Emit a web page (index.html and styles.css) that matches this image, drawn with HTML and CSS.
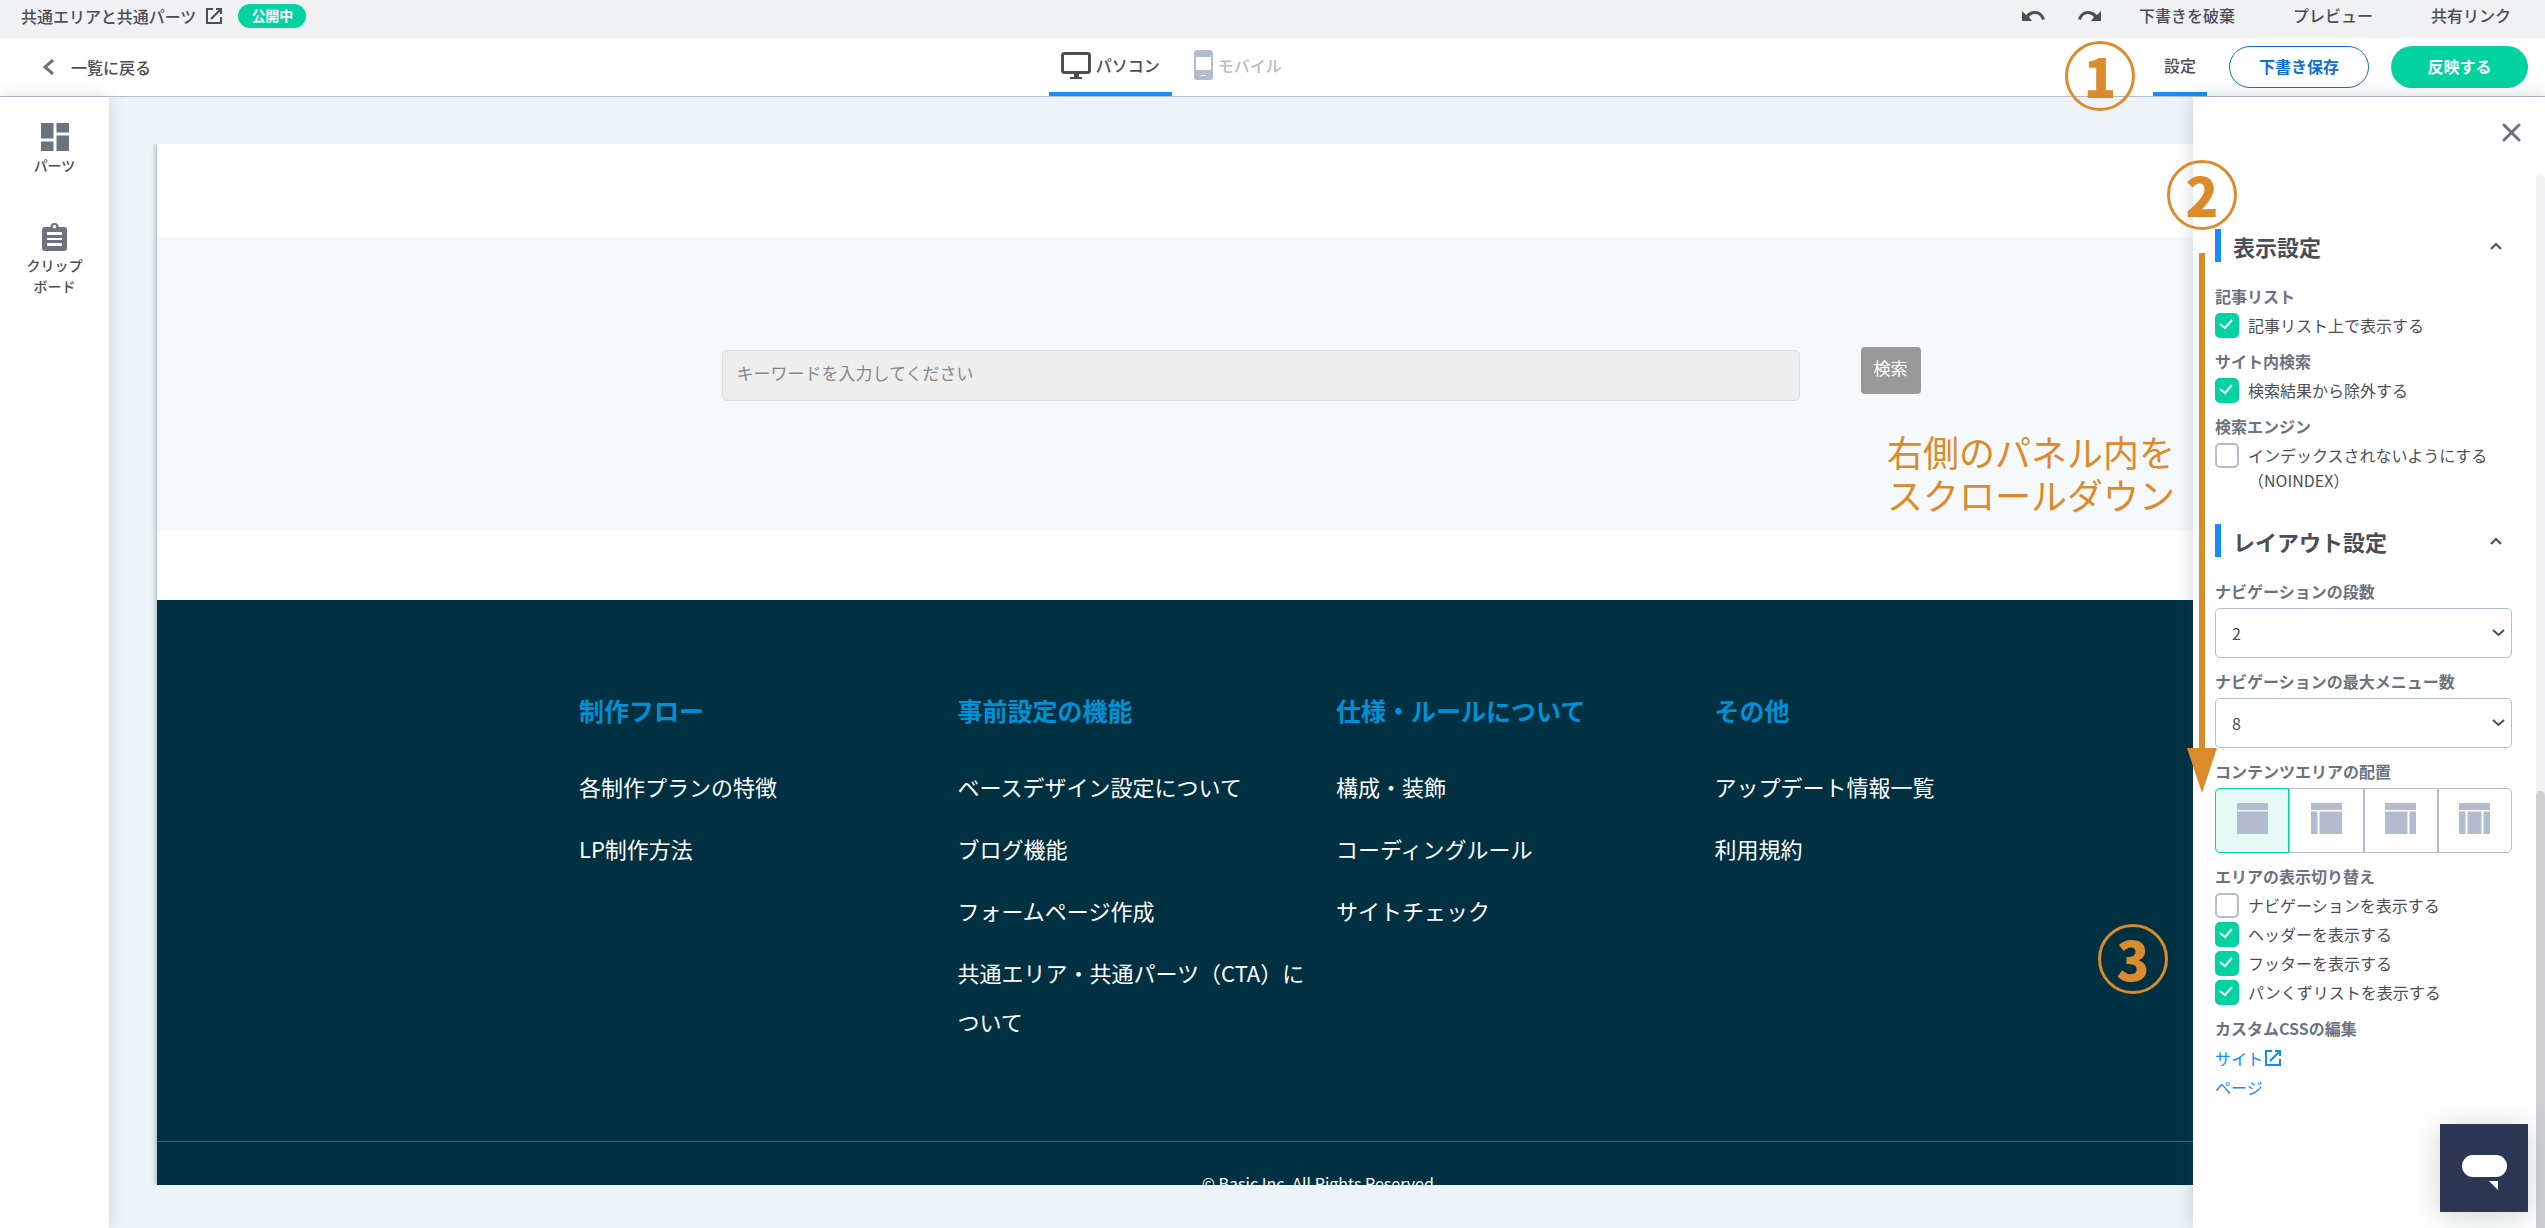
FILE: index.html
```html
<!DOCTYPE html>
<html lang="ja">
<head>
<meta charset="utf-8">
<meta name="viewport" content="width=device-width, initial-scale=1">
<title>共通エリアと共通パーツ</title>
<link rel="stylesheet" href="styles.css">
</head>
<body>
<div class="app">
  <div class="topbar">
    <div class="page-title">
      <a class="title-link" href="#">共通エリアと共通パーツ
        <svg width="16" height="16" viewBox="0 0 16 16" fill="none" stroke="currentColor" stroke-width="2"><path d="M7 1H1v14h14V9M10 1h5v5M15 1 5 11"/></svg>
      </a>
      <span class="badge">公開中</span>
    </div>
    <div class="top-actions">
      <button class="icon-btn" type="button" aria-label="元に戻す"><svg width="23" height="11" viewBox="0 0 23 11" fill="currentColor"><path d="M0 0l4 4C7 1 10 0 13 0c5 0 8 3 10 8l-3 1c-1-4-4-6-7-6-2 0-4 1-6 3l3 4H0z"/></svg></button>
      <button class="icon-btn" type="button" aria-label="やり直す"><svg width="23" height="11" viewBox="0 0 23 11" fill="currentColor"><path d="M23 0l-4 4C16 1 13 0 10 0 5 0 2 3 0 8l3 1c1-4 4-6 7-6 2 0 4 1 6 3l-3 4h10z"/></svg></button>
      <button class="text-btn" type="button">下書きを破棄</button>
      <button class="text-btn" type="button">プレビュー</button>
      <button class="text-btn" type="button">共有リンク</button>
    </div>
  </div>

  <header class="header">
    <a class="back" href="#">
      <svg width="11" height="16" viewBox="0 0 11 16" fill="none" stroke="#6b7280" stroke-width="3"><path d="M10 1 2 8l8 7"/></svg>
      一覧に戻る
    </a>
    <div class="device-tabs">
      <button class="tab tab-active" type="button">
        <svg width="30" height="27" viewBox="0 0 30 27"><rect x="1.500" y="1.500" width="27" height="19" rx="2" fill="none" stroke="#4b4d57" stroke-width="3"/><path d="M13 21h5v4h3v2H9v-2h4z" fill="#4b4d57"/></svg>
        パソコン
      </button>
      <button class="tab tab-idle" type="button">
        <svg width="19" height="30" viewBox="0 0 19 30"><path fill="#b3bbcf" fill-rule="evenodd" d="M3 0h13q3 0 3 3v24q0 3-3 3H3q-3 0-3-3V3q0-3 3-3zM2 7v13h15V7zm5 18v1h5v-1z"/></svg>
        モバイル
      </button>
    </div>
    <div class="header-actions">
      <button class="tab tab-settings" type="button">設定</button>
      <button class="pill pill-outline" type="button">下書き保存</button>
      <button class="pill pill-solid" type="button">反映する</button>
    </div>
  </header>

  <div class="workspace">
    <nav class="sidebar">
      <button class="tool" type="button">
        <svg width="28" height="28" viewBox="0 0 28 28" fill="#6b7280"><path d="M0 0h12.500v15.500H0zM15.500 0H28v9.500H15.500zM0 18.500h12.500V28H0zM15.500 12.500H28V28H15.500z"/></svg>
        <span>パーツ</span>
      </button>
      <button class="tool" type="button">
        <svg width="25" height="28" viewBox="0 0 25 28"><path fill="#6b7280" fill-rule="evenodd" d="M3 4h5.500a4 4 0 0 1 8 0H22q3 0 3 3v18q0 3-3 3H3q-3 0-3-3V7q0-3 3-3zm9.500-2a1.700 1.700 0 1 0 .01 0zM5 9v3h15V9zm0 6v2h15v-2zm0 5v3h15v-3z"/></svg>
        <span>クリップ<br>ボード</span>
      </button>
    </nav>

    <main class="stage">
      <div class="canvas">
        <form class="search">
          <input class="search-input" type="text" placeholder="キーワードを入力してください" aria-label="キーワード">
          <button class="search-btn" type="button">検索</button>
        </form>
        <footer class="site-footer">
          <div class="columns">
            <section class="column">
              <h3>制作フロー</h3>
              <a href="#">各制作プランの特徴</a>
              <a href="#">LP制作方法</a>
            </section>
            <section class="column">
              <h3>事前設定の機能</h3>
              <a href="#">ベースデザイン設定について</a>
              <a href="#">ブログ機能</a>
              <a href="#">フォームページ作成</a>
              <a href="#">共通エリア・共通パーツ（CTA）について</a>
            </section>
            <section class="column">
              <h3>仕様・ルールについて</h3>
              <a href="#">構成・装飾</a>
              <a href="#">コーディングルール</a>
              <a href="#">サイトチェック</a>
            </section>
            <section class="column">
              <h3>その他</h3>
              <a href="#">アップデート情報一覧</a>
              <a href="#">利用規約</a>
            </section>
          </div>
          <p class="copyright">© Basic Inc. All Rights Reserved.</p>
        </footer>
      </div>
    </main>

    <aside class="panel">
      <div class="panel-main">
        <button class="close" type="button" aria-label="閉じる"><svg width="19" height="19" viewBox="0 0 19 19" fill="none" stroke="#6b7280" stroke-width="3" stroke-linecap="round"><path d="M2 2l15 15M17 2 2 17"/></svg></button>

        <section class="group">
          <h2 class="group-title">表示設定
            <svg width="12" height="8" viewBox="0 0 12 8" fill="none" stroke="currentColor" stroke-width="2"><path d="M1 7l5-5 5 5"/></svg>
          </h2>
          <div class="field">
            <p class="label">記事リスト</p>
            <label class="check"><input type="checkbox" checked>記事リスト上で表示する</label>
          </div>
          <div class="field">
            <p class="label">サイト内検索</p>
            <label class="check"><input type="checkbox" checked>検索結果から除外する</label>
          </div>
          <div class="field">
            <p class="label">検索エンジン</p>
            <label class="check"><input type="checkbox"><span>インデックスされないようにする<br>（NOINDEX）</span></label>
          </div>
        </section>

        <section class="group">
          <h2 class="group-title">レイアウト設定
            <svg width="12" height="8" viewBox="0 0 12 8" fill="none" stroke="currentColor" stroke-width="2"><path d="M1 7l5-5 5 5"/></svg>
          </h2>
          <div class="field">
            <label class="label" for="rows">ナビゲーションの段数</label>
            <div class="select">
              <select id="rows"><option>1</option><option selected>2</option></select>
              <svg width="13" height="8" viewBox="0 0 13 8" fill="none" stroke="#4b4d57" stroke-width="2"><path d="M1 1l5.500 5L12 1"/></svg>
            </div>
          </div>
          <div class="field">
            <label class="label" for="menus">ナビゲーションの最大メニュー数</label>
            <div class="select">
              <select id="menus"><option>7</option><option selected>8</option></select>
              <svg width="13" height="8" viewBox="0 0 13 8" fill="none" stroke="#4b4d57" stroke-width="2"><path d="M1 1l5.500 5L12 1"/></svg>
            </div>
          </div>
          <div class="field">
            <p class="label">コンテンツエリアの配置</p>
            <div class="layouts">
              <label class="layout"><input type="radio" name="layout" aria-label="1カラム" checked><svg width="31" height="31" viewBox="0 0 31 31"><path d="M0 0h31v7H0zM0 8.500h31V31H0z"/></svg></label>
              <label class="layout"><input type="radio" name="layout" aria-label="左サイド"><svg width="31" height="31" viewBox="0 0 31 31"><path d="M0 0h31v7H0zM0 8.500h6.500V31H0zM8.500 8.500H31V31H8.500z"/></svg></label>
              <label class="layout"><input type="radio" name="layout" aria-label="右サイド"><svg width="31" height="31" viewBox="0 0 31 31"><path d="M0 0h31v7H0zM0 8.500h22.500V31H0zM24.500 8.500H31V31h-6.500z"/></svg></label>
              <label class="layout"><input type="radio" name="layout" aria-label="両サイド"><svg width="31" height="31" viewBox="0 0 31 31"><path d="M0 0h31v7H0zM0 8.500h6.500V31H0zM8.500 8.500h14V31h-14zM24.500 8.500H31V31h-6.500z"/></svg></label>
            </div>
          </div>
          <div class="field">
            <p class="label">エリアの表示切り替え</p>
            <div class="stack">
              <label class="check"><input type="checkbox">ナビゲーションを表示する</label>
              <label class="check"><input type="checkbox" checked>ヘッダーを表示する</label>
              <label class="check"><input type="checkbox" checked>フッターを表示する</label>
              <label class="check"><input type="checkbox" checked>パンくずリストを表示する</label>
            </div>
          </div>
          <div class="field">
            <p class="label">カスタムCSSの編集</p>
            <div class="stack">
              <a class="link" href="#">サイト<svg width="16" height="16" viewBox="0 0 16 16" fill="none" stroke="currentColor" stroke-width="2"><path d="M7 1H1v14h14V9M10 1h5v5M15 1 5 11"/></svg></a>
              <a class="link" href="#">ページ</a>
            </div>
          </div>
        </section>
      </div>
      <div class="scrollbar"><div class="thumb"></div></div>
    </aside>
  </div>
</div>

<div class="mark mark-1">1</div>
<div class="mark mark-2">2</div>
<div class="mark mark-3">3</div>
<p class="note">右側のパネル内を<br>スクロールダウン</p>
<svg class="arrow" width="30" height="540" viewBox="0 0 30 540"><path fill="#db8b2c" d="M12 0h6v495h12l-15 45L0 495h12z"/></svg>
<button class="chat" type="button" aria-label="チャット"><svg width="88" height="88" viewBox="0 0 88 88" fill="#fff"><rect x="22" y="31" width="45" height="22" rx="11"/><path d="M49 57h9v9z"/></svg></button>
</body>
</html>
```
FILE: styles.css
```css
* { box-sizing: border-box; }

body {
  margin: 0;
  position: relative;
  font-family: "Noto Sans CJK JP", sans-serif;
  font-size: 16px;
  line-height: 24px;
  color: #4b4d57;
}

h2, h3, p { margin: 0; }
a { color: inherit; text-decoration: none; }
svg { display: block; flex: none; }

button {
  margin: 0;
  padding: 0;
  border: 0;
  background: none;
  color: inherit;
  font: inherit;
  cursor: pointer;
}

.app {
  display: flex;
  flex-direction: column;
  height: 100vh;
  overflow: hidden;
}

/* Top bar */
.topbar {
  display: flex;
  justify-content: space-between;
  height: 38px;
  padding: 4px 34px 0 21px;
  background: #eff1f3;
  font-weight: 500;
}

.page-title { display: flex; gap: 16px; }
.title-link { display: flex; align-items: center; gap: 10px; height: 24px; }

.badge {
  width: 68px;
  height: 24px;
  border-radius: 12px;
  background: #00d2a2;
  color: #fff;
  font-size: 14px;
  font-weight: 700;
  line-height: 23px;
  text-align: center;
}

.top-actions { display: flex; align-items: center; height: 24px; }
.icon-btn { margin-right: 33px; }
.icon-btn + .icon-btn { margin-right: 38px; }
.text-btn { padding-bottom: 2px; }
.text-btn + .text-btn { margin-left: 58px; }

/* Header */
.header {
  display: grid;
  grid-template-columns: 22fr auto 27fr;
  height: 59px;
  padding: 0 17px 0 43px;
  border-bottom: 1px solid #b3bbcf;
  background: #fff;
  font-weight: 500;
}

.back { display: flex; align-items: center; gap: 17px; justify-self: start; }
.device-tabs { display: flex; gap: 10px; }

.tab {
  display: flex;
  align-items: center;
  gap: 5px;
  padding: 0 12px;
  border-bottom: 4px solid transparent;
}

.tab-active { border-color: #128cff; }
.tab-idle { color: #b3bbcf; }
.header-actions { display: flex; align-items: center; justify-content: flex-end; gap: 22px; }
.tab-settings { align-self: stretch; padding: 0 11px; border-color: #128cff; }

.pill {
  width: 140px;
  height: 42px;
  padding-bottom: 3px;
  border-radius: 21px;
  font-weight: 700;
}

.pill-outline { border: 1px solid #0f6fd0; color: #0f6fd0; }
.pill-solid { width: 137px; background: #00d2a2; color: #fff; }

/* Workspace */
.workspace {
  position: relative;
  display: flex;
  flex: 1;
  min-height: 0;
}

.sidebar {
  position: relative;
  display: flex;
  flex-direction: column;
  gap: 47px;
  width: 109px;
  padding-top: 26px;
  background: #fff;
  box-shadow: 0 0 16px rgba(60, 80, 100, .18);
}

.tool {
  display: flex;
  flex-direction: column;
  align-items: center;
  gap: 4px;
  font-size: 14px;
  font-weight: 500;
  line-height: 21px;
}

.stage {
  flex: 1;
  min-width: 0;
  padding: 47px 62px 43px 48px;
  background: #ecf4f8;
}

.canvas {
  height: 100%;
  padding-top: 93px;
  overflow: hidden;
  background: #fff;
  box-shadow: -2px 0 4px rgba(60, 70, 80, .3);
  clip-path: inset(0 0 0 -10px);
}

.search {
  display: flex;
  justify-content: center;
  align-items: flex-start;
  gap: 61px;
  height: 294px;
  padding: 110px 0 0 2px;
  background: #f5f9fc;
}

.search-input {
  width: 1078px;
  height: 51px;
  margin-top: 3px;
  padding: 0 14px 6px;
  border: 1px solid #ddd;
  border-radius: 5px;
  background: #eee;
  font: inherit;
  font-size: 17px;
}

.search-input::placeholder { color: #888; }

.search-btn {
  width: 60px;
  height: 47px;
  padding-bottom: 5px;
  border-radius: 4px;
  background: #999;
  color: #fff;
  font-size: 17px;
}

.site-footer {
  margin-top: 69px;
  padding-top: 86px;
  background: #003143;
  color: #fff;
}

.columns {
  display: grid;
  grid-template-columns: repeat(4, 1fr);
  width: 1514px;
  height: 455px;
  margin: 0 auto;
}

.column {
  display: flex;
  flex-direction: column;
  gap: 13px;
  padding: 0 12px 0 16px;
  font-size: 22px;
  line-height: 49px;
}

.column h3 {
  margin-bottom: 14px;
  color: #0090d4;
  font-size: 25px;
  font-weight: 700;
}

.copyright {
  height: 100px;
  padding-top: 29px;
  border-top: 1px solid #44636f;
  text-align: center;
}

/* Settings panel */
.panel {
  position: absolute;
  top: 0;
  right: 0;
  bottom: 0;
  display: flex;
  width: 352px;
  background: #fff;
  box-shadow: 0 0 16px rgba(60, 80, 100, .25);
}

.panel-main {
  display: flex;
  flex: 1;
  flex-direction: column;
  padding: 26px 24px 0 22px;
}

.close { align-self: flex-end; margin: 0 -9px 87px 0; }
.group { margin-bottom: 31px; }

.group-title {
  display: flex;
  align-items: center;
  justify-content: space-between;
  height: 33px;
  margin-bottom: 23px;
  padding: 0 10px 0 12px;
  border-left: 6px solid #128cff;
  font-size: 22px;
  font-weight: 700;
}

.field + .field { margin-top: 12px; }

.label {
  display: block;
  margin-bottom: 6px;
  color: #6b7280;
  font-weight: 700;
  line-height: 22px;
}

.check {
  display: flex;
  gap: 9px;
  line-height: 25px;
}

.check input {
  appearance: none;
  flex: none;
  width: 24px;
  height: 25px;
  margin: 0;
  border: 2px solid #b3bbcf;
  border-radius: 5px;
}

.check input:checked {
  border-color: #00d2a2;
  background: #00d2a2 url("data:image/svg+xml,%3Csvg xmlns='http://www.w3.org/2000/svg' width='14' height='11' fill='none' stroke='white' stroke-width='2'%3E%3Cpath d='M1 5l5 4 7-8'/%3E%3C/svg%3E") 2px 4px no-repeat;
}

.stack { display: flex; flex-direction: column; gap: 4px; }

.select { display: grid; align-items: center; }
.select > * { grid-area: 1 / 1; }
.select svg { justify-self: end; margin-right: 7px; pointer-events: none; }

.select select {
  appearance: none;
  width: 100%;
  height: 50px;
  padding: 0 16px;
  border: 1px solid #b3bbcf;
  border-radius: 5px;
  background: #fff;
  color: inherit;
  font: inherit;
}

.layouts { display: grid; grid-template-columns: repeat(4, 1fr); height: 65px; }

.layout {
  display: flex;
  justify-content: center;
  padding-top: 14px;
  border: 1px solid #b3bbcf;
  fill: #b3bbcf;
}

.layout:first-child { border-radius: 5px 0 0 5px; }
.layout:last-child { border-radius: 0 5px 5px 0; }
.layout input { appearance: none; width: 0; height: 0; margin: 0; }
.layout:has(:checked) { border-color: #00d2a2; background: #e5faf5; }

.link { display: flex; align-items: center; gap: 2px; height: 25px; color: #128cff; }

.scrollbar {
  display: grid;
  grid-template-rows: 24fr 17fr;
  width: 9px;
  margin-top: 78px;
  border-radius: 5px 5px 0 0;
  background: #eff1f3;
}

.thumb { grid-row: 2; border-radius: 5px 5px 0 0; background: #cfd0d4; }

/* Guide marks drawn over the screen */
.mark {
  position: absolute;
  width: 70px;
  height: 70px;
  border: 3px solid #db8b2c;
  border-radius: 50%;
  color: #db8b2c;
  font-size: 54px;
  font-weight: 900;
  line-height: 61px;
  text-align: center;
}

.mark-1 { top: 41px; right: 410px; }
.mark-2 { top: 160px; right: 308px; }
.mark-3 { top: 924px; right: 377px; }

.note {
  position: absolute;
  top: 430px;
  right: 370px;
  color: #db8b2c;
  font-size: 36px;
  line-height: 43px;
}

.arrow { position: absolute; top: 253px; right: 328px; }

.chat {
  position: absolute;
  top: 1124px;
  right: 17px;
  background: #2d3653;
  box-shadow: 0 4px 32px rgba(0, 40, 30, .2);
}
```
